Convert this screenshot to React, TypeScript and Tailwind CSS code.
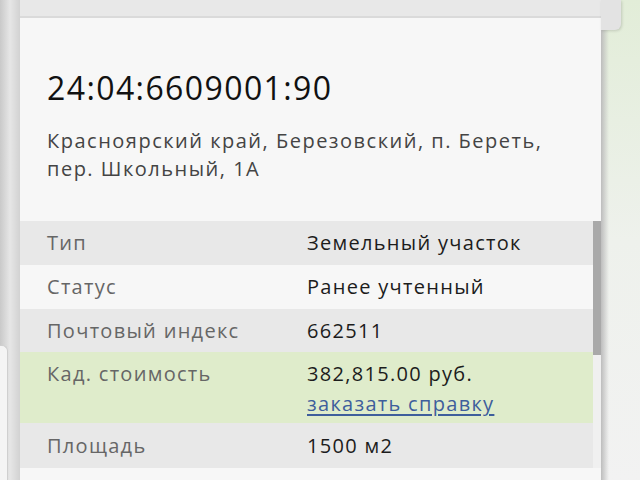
import React from "react";

const rows = [
  { label: "Тип", value: "Земельный участок", bg: "bg-[#e8e8e8]", h: "h-[44px]" },
  { label: "Статус", value: "Ранее учтенный", bg: "bg-[#f7f7f7]", h: "h-[44px]" },
  { label: "Почтовый индекс", value: "662511", bg: "bg-[#e8e8e8]", h: "h-[43px]" },
];

const Row = ({ label, value, bg, h }: { label: string; value: string; bg: string; h: string }) => (
  <div className={`flex items-center ${h} ${bg}`}>
    <div className="w-[287px] pl-[27px] text-[#666]">{label}</div>
    <div className="text-[#1c1c1c]">{value}</div>
  </div>
);

export default function App() {
  return (
    <div
      className="flex w-[640px] h-[480px] overflow-hidden bg-[#eef0ee] text-[20px] tracking-[1.3px]"
      style={{ fontFamily: '"Open Sans", sans-serif' }}
    >
      {/* left edge of the page behind */}
      <div className="relative w-[20px] shrink-0 bg-gradient-to-r from-[#c9c9c9] via-[#e6e6e6] to-[#d2d2d2]">
        <div className="absolute left-0 top-[345px] h-[140px] w-[8px] rounded-tr-[6px] bg-[#f4f4f4] border-r border-t border-[#cfcfcf]" />
      </div>

      {/* card */}
      <div className="flex w-[581px] shrink-0 flex-col bg-[#f7f7f7]">
        <div className="h-[18px] shrink-0 bg-[#e8e8e8] border-b-2 border-[#dadada]" />
        <div className="px-[27px] pt-[50px] pb-[38px]">
          <div className="text-[32px] leading-[40px] tracking-[1.4px] text-[#111]">24:04:6609001:90</div>
          <div className="mt-[19px] leading-[28px] tracking-[1.5px] text-[#444]">
            Красноярский край, Березовский, п. Береть,
            <br />
            пер. Школьный, 1А
          </div>
        </div>
        <div className="flex">
          <div className="w-[573px]">
            {rows.map((r) => (
              <Row key={r.label} {...r} />
            ))}
            <div className="flex h-[71px] bg-[#dfeccb] pt-[7px]">
              <div className="w-[287px] pl-[27px] leading-[30px] text-[#666]">Кад. стоимость</div>
              <div className="leading-[30px]">
                <div className="text-[#1c1c1c]">382,815.00 руб.</div>
                <div className="text-[#3e5e9c] underline underline-offset-[3px]">заказать справку</div>
              </div>
            </div>
            <Row label="Площадь" value="1500 м2" bg="bg-[#e8e8e8]" h="h-[45px]" />
          </div>
          <div className="w-[8px] bg-[#f0f0f0]">
            <div className="h-[134px] bg-[#a9a9a9]" />
          </div>
        </div>
      </div>

      {/* right side behind */}
      <div className="relative w-[39px] shrink-0 bg-gradient-to-b from-[#e2edd8] via-[#eef1ec] to-[#f2f2f2]">
        <div className="absolute left-0 top-0 h-full w-[8px] bg-gradient-to-r from-[#bdbdbd] to-transparent" />
        <div className="absolute left-0 top-0 h-[30px] w-[20px] rounded-br-[6px] bg-[#e3e3e3] shadow-[1px_1px_3px_rgba(0,0,0,0.15)]" />
      </div>
    </div>
  );
}
